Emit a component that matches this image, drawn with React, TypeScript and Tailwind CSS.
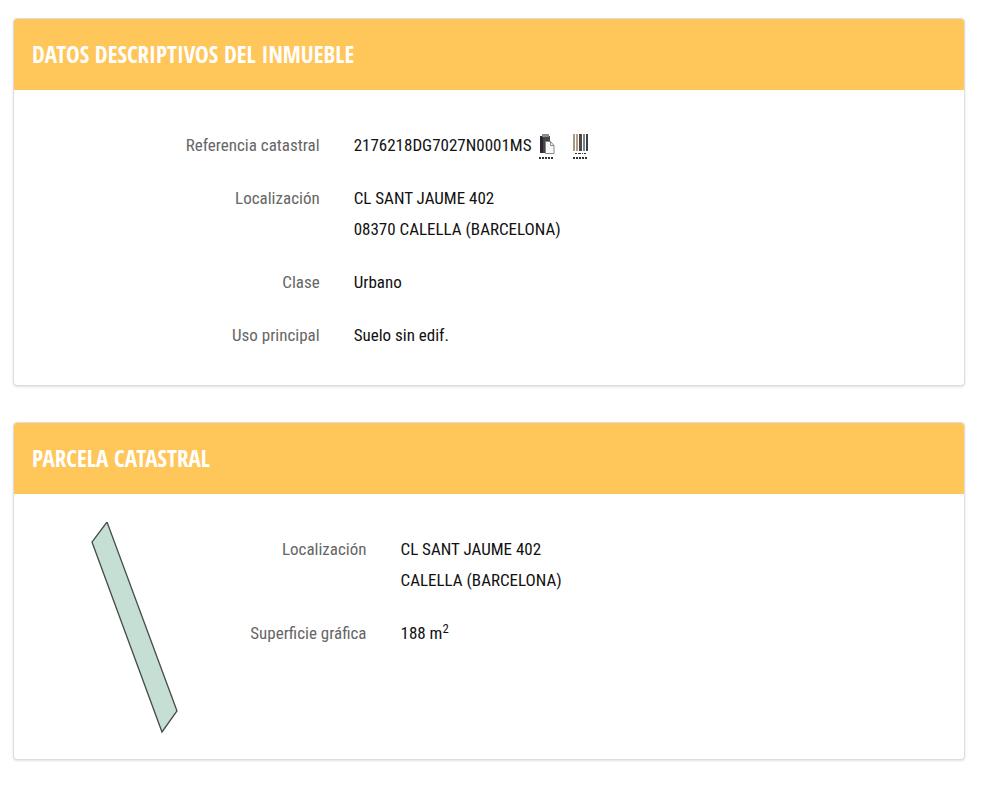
import type { ReactNode } from 'react';

interface PanelProps {
  title: string;
  children: ReactNode;
}

interface FieldProps {
  label: string;
  labelWidth: string;
  children: ReactNode;
}

function Panel({ title, children }: PanelProps) {
  return (
    <section className="overflow-hidden rounded border border-[#dddddd] bg-white shadow-sm">
      <h2 className="bg-[#ffc65a] px-[18px] py-5 font-['Open_Sans_Condensed','Open_Sans',sans-serif] text-[23px] leading-[31px] font-bold text-white">
        {title}
      </h2>
      {children}
    </section>
  );
}

function Field({ label, labelWidth, children }: FieldProps) {
  return (
    <div className="flex">
      <dt className={`${labelWidth} shrink-0 pr-[11px] text-right text-[#666666]`}>{label}</dt>
      <dd className="grow pl-[23px] text-[#111111]">{children}</dd>
    </div>
  );
}

function PasteIcon() {
  return (
    <svg width="16" height="26" viewBox="0 0 16 26" aria-hidden="true">
      <path d="M1 3h10v17H1z" fill="#4b4447" />
      <path d="M1 3h3v17H1z" fill="#2b2730" />
      <path d="M3 1h7v3H3z" fill="#8b8a92" />
      <path d="M6.5 8.5h5l3.5 4v8H6.5z" fill="#f8f8f8" stroke="#8a888d" />
      <path d="M11.5 8.5v4h3.5" fill="none" stroke="#8a888d" />
      <path d="M0 25h15" stroke="#333333" strokeWidth="2" strokeDasharray="2 1" />
    </svg>
  );
}

function BarcodeIcon() {
  return (
    <svg width="16" height="26" viewBox="0 0 16 26" aria-hidden="true">
      <path d="M1 1v17" stroke="#a8997f" strokeWidth="2" />
      <path d="M4 1v17" stroke="#a8a090" strokeWidth="2" />
      <path d="M7.5 1v17" stroke="#5b4438" strokeWidth="3" />
      <path d="M11 1v17" stroke="#6d8596" strokeWidth="2" />
      <path d="M14 1v17" stroke="#3f4046" strokeWidth="2" />
      <path d="M2 20.5h12" stroke="#333333" strokeDasharray="2 1 3 1 1 1" />
      <path d="M0 25h15" stroke="#333333" strokeWidth="2" strokeDasharray="2 1" />
    </svg>
  );
}

export default function App() {
  return (
    <main className="flex min-h-screen flex-col gap-9 bg-white pt-[18px] pr-[35px] pb-10 pl-[13px] font-['Roboto_Condensed','Open_Sans',sans-serif] text-[17px] leading-[31px]">
      <Panel title="DATOS DESCRIPTIVOS DEL INMUEBLE">
        <dl className="flex flex-col gap-[22px] pt-10 pb-[34px]">
          <Field label="Referencia catastral" labelWidth="w-1/3">
            <span className="flex items-center">
              2176218DG7027N0001MS
              <button type="button" aria-label="Copiar referencia catastral" className="ml-2 cursor-pointer">
                <PasteIcon />
              </button>
              <button type="button" aria-label="Ver código de barras" className="ml-[18px] cursor-pointer">
                <BarcodeIcon />
              </button>
            </span>
          </Field>
          <Field label="Localización" labelWidth="w-1/3">
            CL SANT JAUME 402
            <br />
            08370 CALELLA (BARCELONA)
          </Field>
          <Field label="Clase" labelWidth="w-1/3">Urbano</Field>
          <Field label="Uso principal" labelWidth="w-1/3">Suelo sin edif.</Field>
        </dl>
      </Panel>

      <Panel title="PARCELA CATASTRAL">
        <div className="flex">
          {/* Croquis de la parcela */}
          <div className="w-[168px] shrink-0 pt-7 pb-[25px] pl-[77px]">
            <svg width="88" height="212" viewBox="0 0 88 212" role="img" aria-label="Croquis de la parcela">
              <path d="M16 0 1 20 71 210 86 189Z" fill="#c6dfd5" stroke="#454d49" strokeWidth="1.3" />
            </svg>
          </div>
          <dl className="flex grow flex-col gap-[22px] pt-10">
            <Field label="Localización" labelWidth="w-1/4">
              CL SANT JAUME 402
              <br />
              CALELLA (BARCELONA)
            </Field>
            <Field label="Superficie gráfica" labelWidth="w-1/4">
              188 m<sup>2</sup>
            </Field>
          </dl>
        </div>
      </Panel>
    </main>
  );
}
